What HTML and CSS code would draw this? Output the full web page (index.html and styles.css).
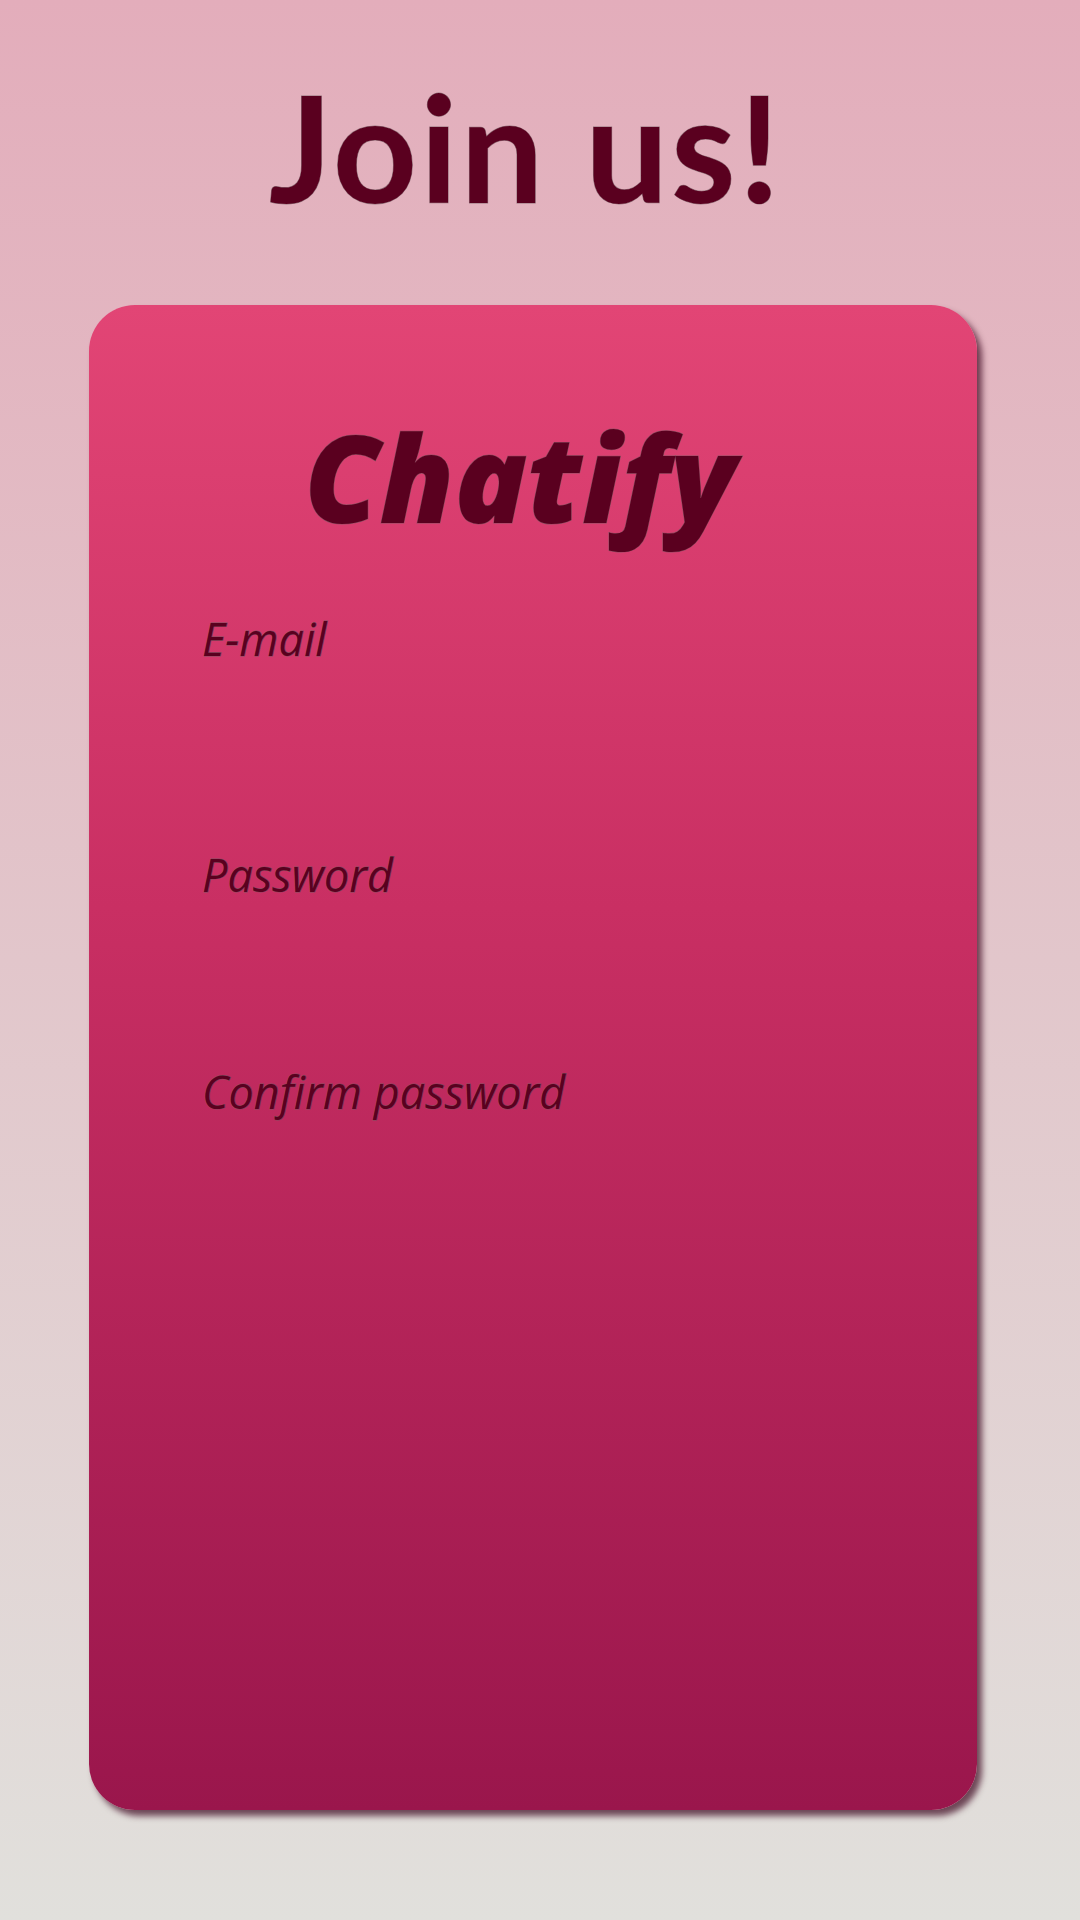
FILE: index.html
```html
<!DOCTYPE html>
<html lang="en">
<head>
<meta charset="utf-8">
<title>Join us!</title>
<link rel="stylesheet" href="styles.css">
</head>
<body>
<main class="page">
  <h1 class="title">Join us!</h1>
  <section class="card">
    <h2 class="brand">Chatify</h2>
    <form class="form">
      <div class="field field-email">
        <label class="label" for="email">E-mail</label>
        <input class="input" id="email" type="email">
      </div>
      <div class="field field-pass">
        <label class="label" for="pass">Password</label>
        <input class="input" id="pass" type="password">
      </div>
      <div class="field field-confirm">
        <label class="label" for="confirm">Confirm password</label>
        <input class="input" id="confirm" type="password">
      </div>
    </form>
  </section>
</main>
</body>
</html>
```

FILE: styles.css
```css
* { box-sizing: border-box; }

html, body {
  margin: 0;
  padding: 0;
}

body {
  width: 1080px;
  height: 1920px;
  background: linear-gradient(to bottom, #e3adbb 0%, #e2c6cb 50%, #e1e0dc 100%);
  font-family: "Open Sans", "Noto Sans", "DejaVu Sans", sans-serif;
  color: #5a001f;
  overflow: hidden;
}

.page {
  display: flex;
  flex-direction: column;
  padding-top: 73px;
}

.title {
  margin: 0 0 1px;
  font-family: Lato, "Open Sans", sans-serif;
  font-size: 147px;
  line-height: 1;
  font-weight: 700;
  text-align: center;
  letter-spacing: 3px;
  padding-right: 28px;
  -webkit-text-stroke: 1px rgba(110, 90, 95, 0.7);
  paint-order: stroke fill;
}

.card {
  margin: 84px 0 0 89px;
  width: 888px;
  height: 1505px;
  border-radius: 46px;
  background: linear-gradient(to bottom, #e24575 0%, #c92f63 40%, #9a164c 100%);
  box-shadow: 5px 6px 6px rgba(60, 5, 30, 0.7);
  padding: 112px 0 0 113px;
  display: flex;
  flex-direction: column;
}

.brand {
  margin: 0 0 0 -113px;
  font-size: 120px;
  line-height: 1;
  font-weight: 800;
  font-style: italic;
  text-align: center;
  padding-right: 26px;
  -webkit-text-stroke: 1px rgba(110, 90, 95, 0.7);
  paint-order: stroke fill;
}

.form {
  display: flex;
  flex-direction: column;
  margin-top: 79px;
}

.field {
  display: flex;
  flex-direction: column;
}

.label {
  font-size: 45px;
  line-height: 1;
  font-style: italic;
  font-weight: 400;
  -webkit-text-stroke: 0.8px rgba(110, 90, 95, 0.8);
  paint-order: stroke fill;
}

.input {
  background: transparent;
  border: none;
  outline: none;
  padding: 0;
  margin: 0;
  width: 600px;
}

.field-email .input { height: 191px; }
.field-pass .input { height: 172px; }
.field-confirm .input { height: 120px; }
```
